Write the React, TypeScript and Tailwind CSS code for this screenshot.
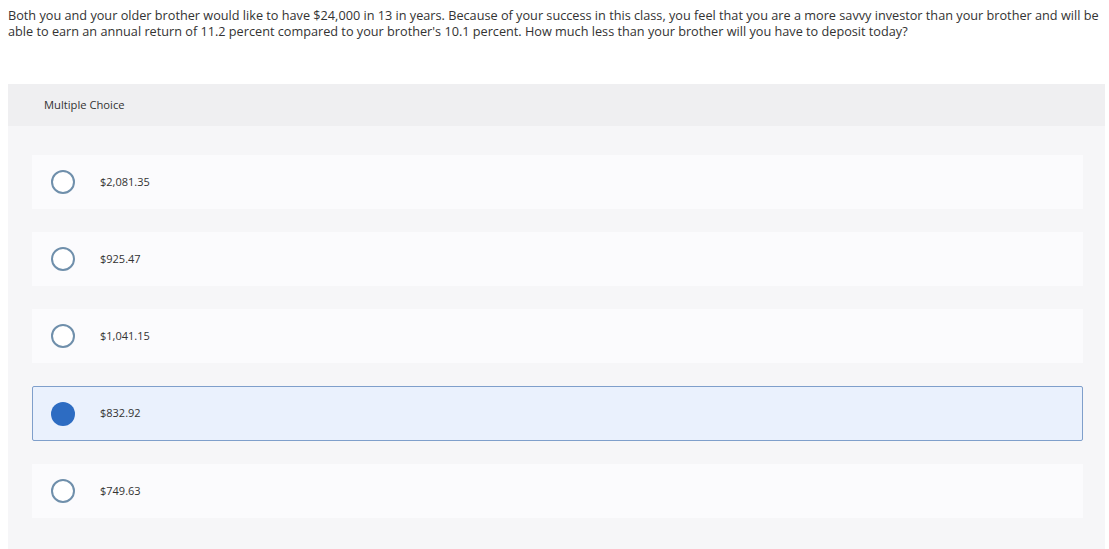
const options = [
  { id: 'a', label: '$2,081.35' },
  { id: 'b', label: '$925.47' },
  { id: 'c', label: '$1,041.15' },
  { id: 'd', label: '$832.92' },
  { id: 'e', label: '$749.63' },
]

const selected = 'd'

const App = () => {
  return (
    <div className="min-h-[549px] bg-white font-['Open_Sans','Lato',sans-serif] text-[#333]">
      <p className="pr-1 pl-2 pt-[7px] text-[12.7px] leading-4 text-[#333]">
        Both you and your older brother would like to have $24,000 in 13 in years. Because of your success in this class,
        you feel that you are a more savvy investor than your brother and will be able to earn an annual return of 11.2
        percent compared to your brother's 10.1 percent. How much less than your brother will you have to deposit
        today?
      </p>

      <div className="mt-[45px] ml-2 mr-1 bg-[#f6f6f8] pb-8">
        <div className="flex h-[42px] items-center bg-[#efeff1] pl-9 text-[11.2px] text-[#333]">Multiple Choice</div>

        <div className="flex flex-col gap-[23px] pt-[29px] pl-6 pr-[22px]">
          {options.map((opt) => {
            const isSelected = opt.id === selected
            return (
              <label
                key={opt.id}
                className={
                  isSelected
                    ? 'flex h-[55px] items-center gap-[25px] rounded-[2px] border border-[#7f9fcb] bg-[#eaf1fd] pl-[18px]'
                    : 'flex h-[54px] items-center gap-[25px] border border-transparent bg-[#fbfbfd] pl-[18px]'
                }
              >
                {isSelected ? (
                  <span className="h-6 w-6 rounded-full bg-[#2d6cc2]" />
                ) : (
                  <span className="h-6 w-6 rounded-full border-2 border-[#6f8fab] bg-white" />
                )}
                <span className="text-[11px] text-[#333]">{opt.label}</span>
              </label>
            )
          })}
        </div>
      </div>
    </div>
  )
}

export default App
